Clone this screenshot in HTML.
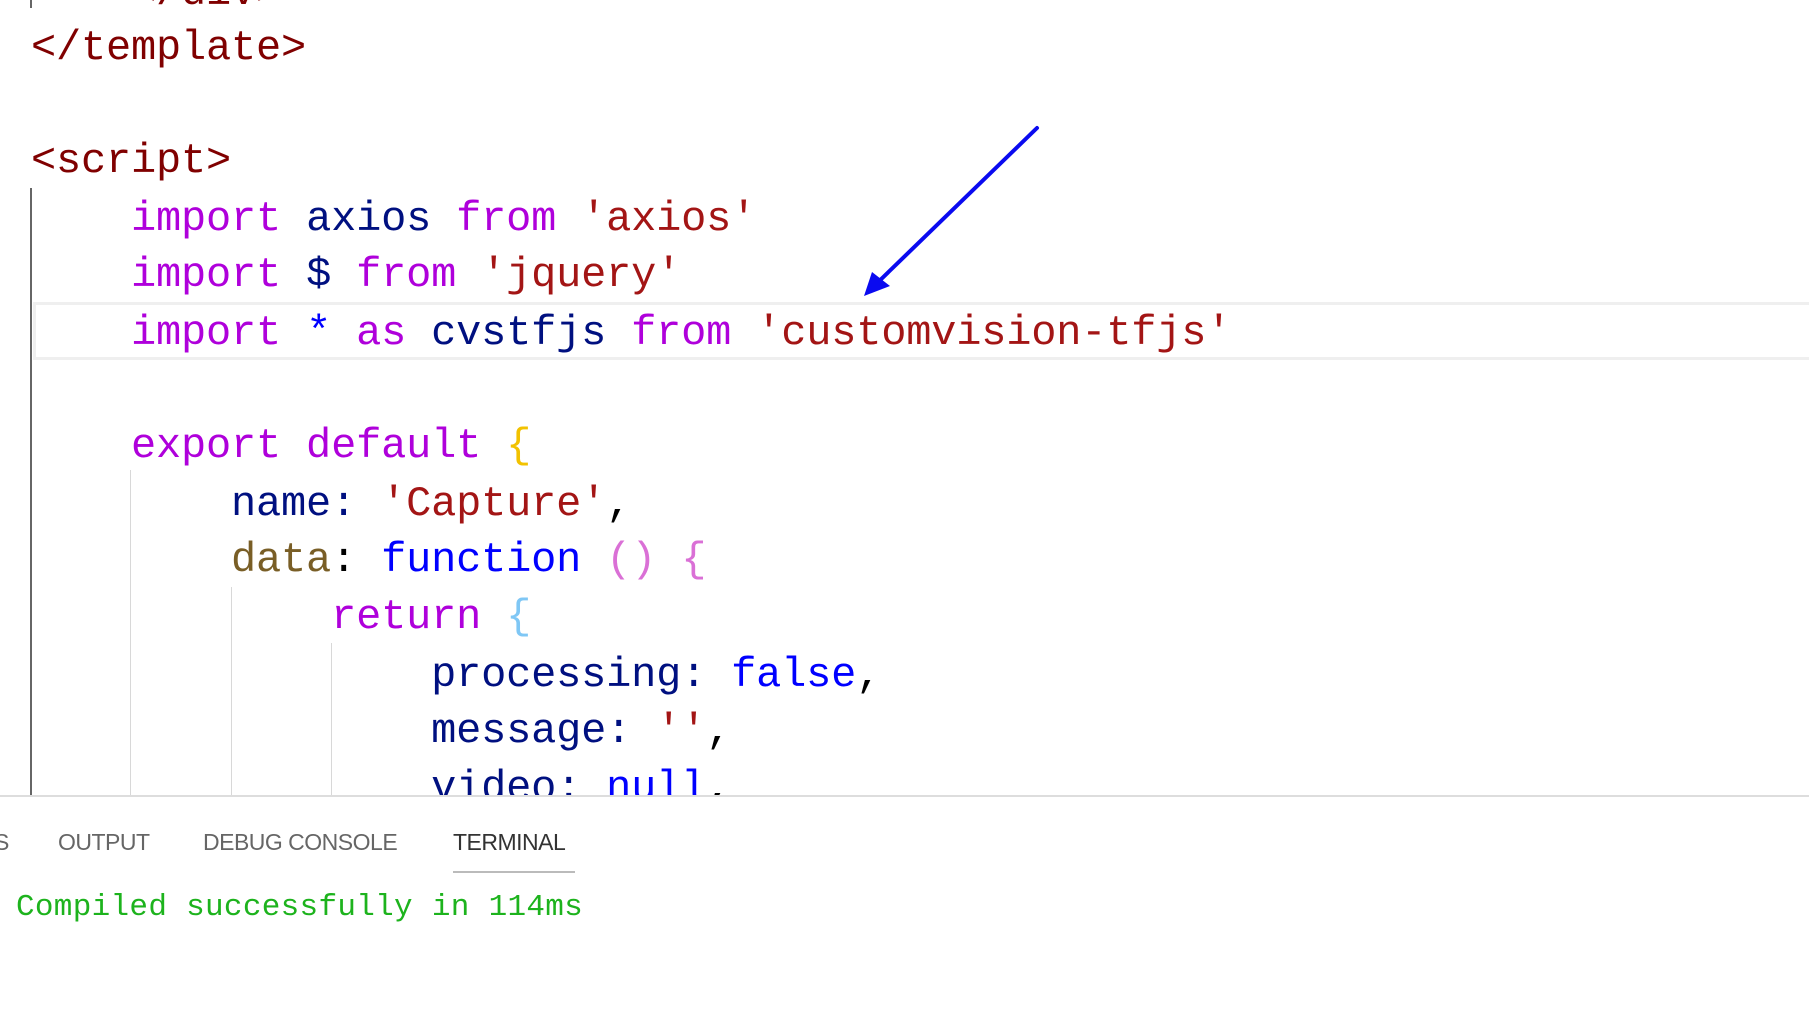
<!DOCTYPE html>
<html><head><meta charset="utf-8"><style>
html,body{margin:0;padding:0;background:#fff;width:1809px;height:1016px;overflow:hidden;position:relative}
.l{position:absolute;left:31px;height:57px;line-height:57px;font-family:"Liberation Mono",monospace;font-size:42px;letter-spacing:-0.2px;white-space:pre;color:#001080}
.k{color:#af00db}.v{color:#001080}.s{color:#a31515}.t{color:#800000}.f{color:#0000ff}.d{color:#795e26}.y{color:#f2c200}.p{color:#da70d6}.b{color:#7fc7f5}.n{color:#000}
.g{position:absolute;width:1px;background:#d8d8d8}
.tab{position:absolute;top:829px;font-family:"Liberation Sans",sans-serif;font-size:23px;color:#666;letter-spacing:-0.5px}
</style></head><body>
<div class="g" style="left:30px;top:0;height:8px;background:#666;width:2px"></div>
<div class="g" style="left:30px;top:188px;height:608px;background:#666;width:2px"></div>
<div class="g" style="left:130px;top:470px;height:326px"></div>
<div class="g" style="left:231px;top:587px;height:209px"></div>
<div class="g" style="left:331px;top:643px;height:153px"></div>
<div style="position:absolute;left:33px;top:302px;width:1776px;height:52px;border:3px solid #efefef;border-right:none"></div>
<div style="position:absolute;left:0;top:0;width:1809px;height:796px;overflow:hidden">
<div class="l t" style="top:-35px">    &lt;/div&gt;</div>
<div class="l t" style="top:20px">&lt;/template&gt;</div>
<div class="l t" style="top:133px">&lt;script&gt;</div>
<div class="l" style="top:191px">    <span class="k">import</span> axios <span class="k">from</span> <span class="s">'axios'</span></div>
<div class="l" style="top:247px">    <span class="k">import</span> $ <span class="k">from</span> <span class="s">'jquery'</span></div>
<div class="l" style="top:305px">    <span class="k">import</span> <span class="f">*</span> <span class="k">as</span> cvstfjs <span class="k">from</span> <span class="s">'customvision-tfjs'</span></div>
<div class="l" style="top:418px">    <span class="k">export default</span> <span class="y">{</span></div>
<div class="l" style="top:476px">        name: <span class="s">'Capture'</span><span class="n">,</span></div>
<div class="l" style="top:532px">        <span class="d">data</span><span class="n">:</span> <span class="f">function</span> <span class="p">()</span> <span class="p">{</span></div>
<div class="l" style="top:589px">            <span class="k">return</span> <span class="b">{</span></div>
<div class="l" style="top:647px">                processing: <span class="f">false</span><span class="n">,</span></div>
<div class="l" style="top:703px">                message: <span class="s">''</span><span class="n">,</span></div>
<div class="l" style="top:760px">                video: <span class="f">null</span><span class="n">,</span></div>
</div>
<div style="position:absolute;left:0;top:795px;width:1809px;height:2px;background:#ddd"></div>
<div class="tab" style="left:-6px">S</div>
<div class="tab" style="left:58px">OUTPUT</div>
<div class="tab" style="left:203px">DEBUG CONSOLE</div>
<div class="tab" style="left:453px;color:#333">TERMINAL</div>
<div style="position:absolute;left:453px;top:871px;width:122px;height:2px;background:#bbb"></div>
<div style="position:absolute;left:16px;top:890px;font-family:'Liberation Mono',monospace;font-size:31px;color:#1db31d;white-space:pre;letter-spacing:0.3px">Compiled successfully in 114ms</div>
<svg style="position:absolute;left:0;top:0" width="1809" height="1016">
<line x1="1037" y1="128" x2="872" y2="288" stroke="#0a0af0" stroke-width="4" stroke-linecap="round"/>
<polygon points="864,296 872,272 890,286" fill="#0a0af0"/>
</svg>
</body></html>
